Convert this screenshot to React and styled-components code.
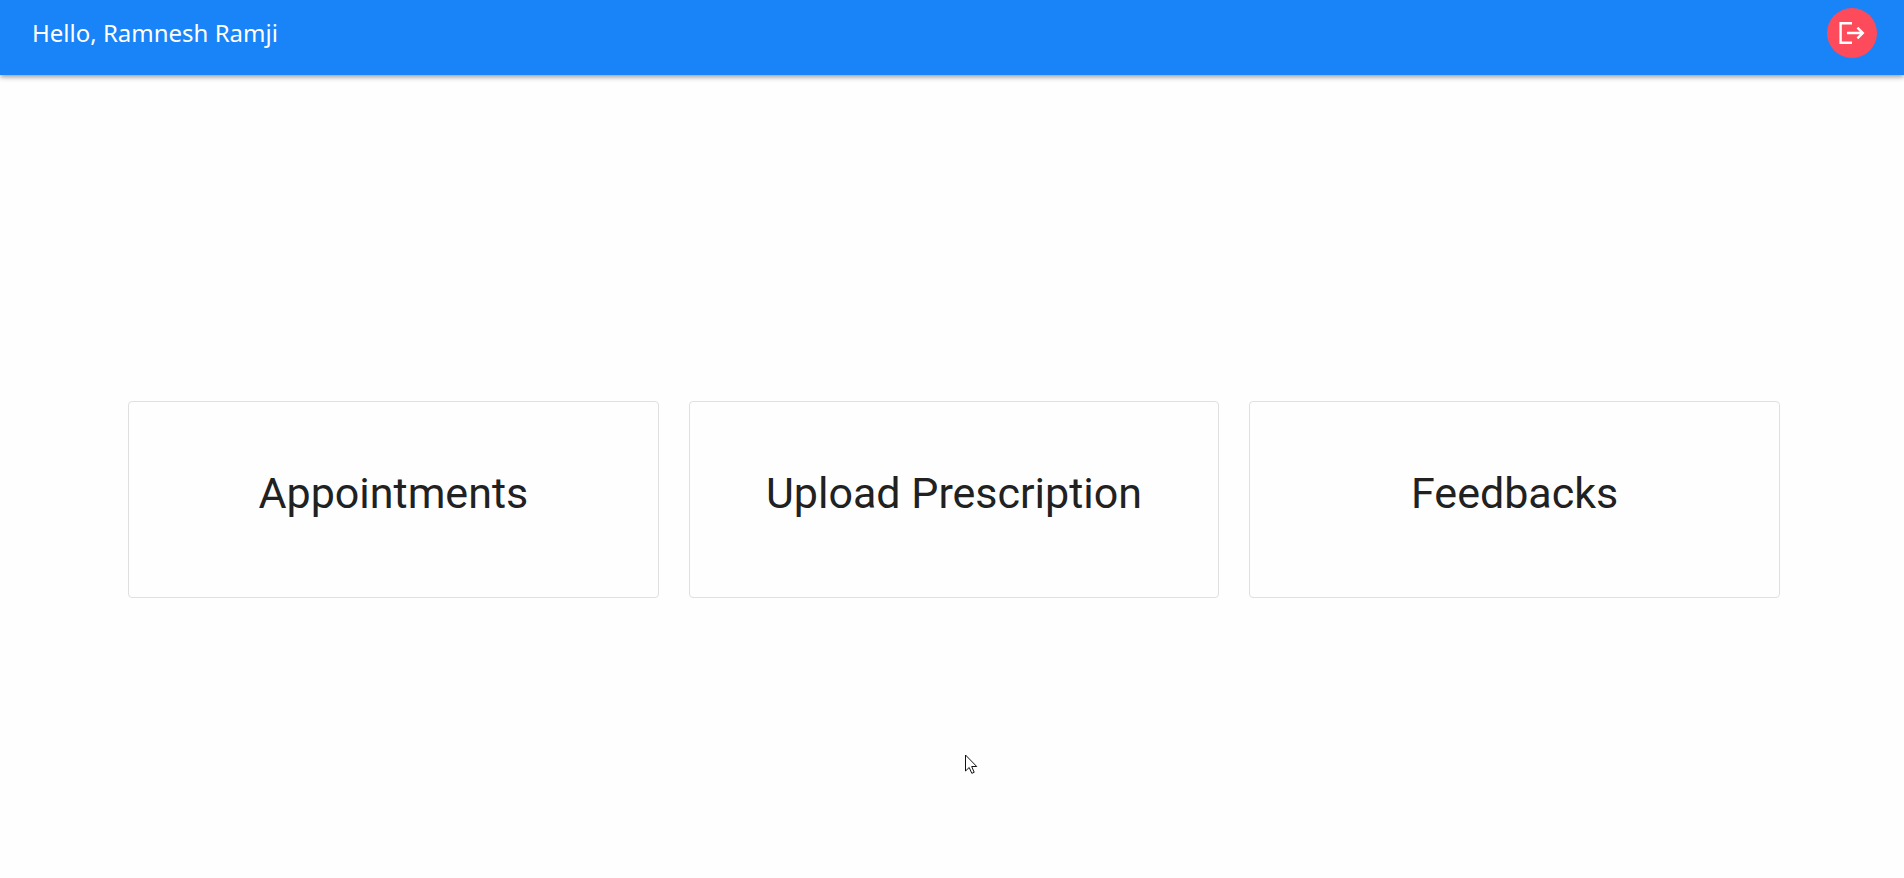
import React from "react";
import styled, { createGlobalStyle } from "styled-components";

const GlobalStyle = createGlobalStyle`
  *, *::before, *::after { box-sizing: border-box; }
  body {
    margin: 0;
    background: #fefefe;
    color: #212121;
    font-family: Roboto, "Liberation Sans", sans-serif;
  }
`;

const Page = styled.div`
  min-height: 100vh;
  display: flex;
  flex-direction: column;
`;

const TopBar = styled.header`
  display: flex;
  align-items: center;
  justify-content: space-between;
  padding: 8px 27px 17px 32px;
  background: #1884f8;
  box-shadow: 0 2px 5px rgba(0, 0, 0, 0.4);
`;

const Greeting = styled.p`
  margin: 0;
  color: #fff;
  font: 400 24px/32px "Noto Sans", sans-serif;
`;

const LogoutButton = styled.button`
  display: grid;
  place-items: center;
  width: 50px;
  height: 50px;
  padding: 0;
  border: 0;
  border-radius: 50%;
  background: #fd4b5b;
  color: #fff;
  cursor: pointer;
`;

const Main = styled.main`
  flex: 1;
  display: flex;
  align-items: center;
  padding: 46px 124px 0 128px;
`;

const CardGrid = styled.nav`
  flex: 1;
  display: grid;
  grid-template-columns: repeat(3, 1fr);
  gap: 30px;
`;

const Card = styled.a`
  display: block;
  padding: 65px 16px 78px;
  border: 1px solid #e0e0e0;
  border-radius: 4px;
  color: inherit;
  font-size: 43px;
  line-height: 52px;
  text-align: center;
  text-decoration: none;
`;

const Pointer = styled.svg`
  position: fixed;
  left: 965px;
  top: 754px;
  pointer-events: none;
`;

const sections = [
  { label: "Appointments", href: "#appointments" },
  { label: "Upload Prescription", href: "#upload-prescription" },
  { label: "Feedbacks", href: "#feedbacks" },
];

function LogoutIcon() {
  return (
    <svg width="26" height="22" viewBox="0 0 26 22" fill="none" stroke="currentColor" strokeWidth="2.4" aria-hidden="true">
      <path d="M13 1.2H1.6v19.6H13" />
      <path d="M8 11h16M18.4 5.6l5.4 5.4-5.4 5.4" />
    </svg>
  );
}

export default function App() {
  return (
    <Page>
      <GlobalStyle />
      <TopBar>
        <Greeting>Hello, Ramnesh Ramji</Greeting>
        <LogoutButton type="button" aria-label="Log out">
          <LogoutIcon />
        </LogoutButton>
      </TopBar>
      <Main>
        <CardGrid aria-label="Sections">
          {sections.map(({ label, href }) => (
            <Card key={href} href={href}>{label}</Card>
          ))}
        </CardGrid>
      </Main>
      <Pointer width="13" height="21" viewBox="0 0 13 21" aria-hidden="true">
        <path d="M.5 1v16l3.7-3.5 2.6 5.8 2.4-1-2.5-5.8h5z" fill="#fff" stroke="#111" />
      </Pointer>
    </Page>
  );
}
